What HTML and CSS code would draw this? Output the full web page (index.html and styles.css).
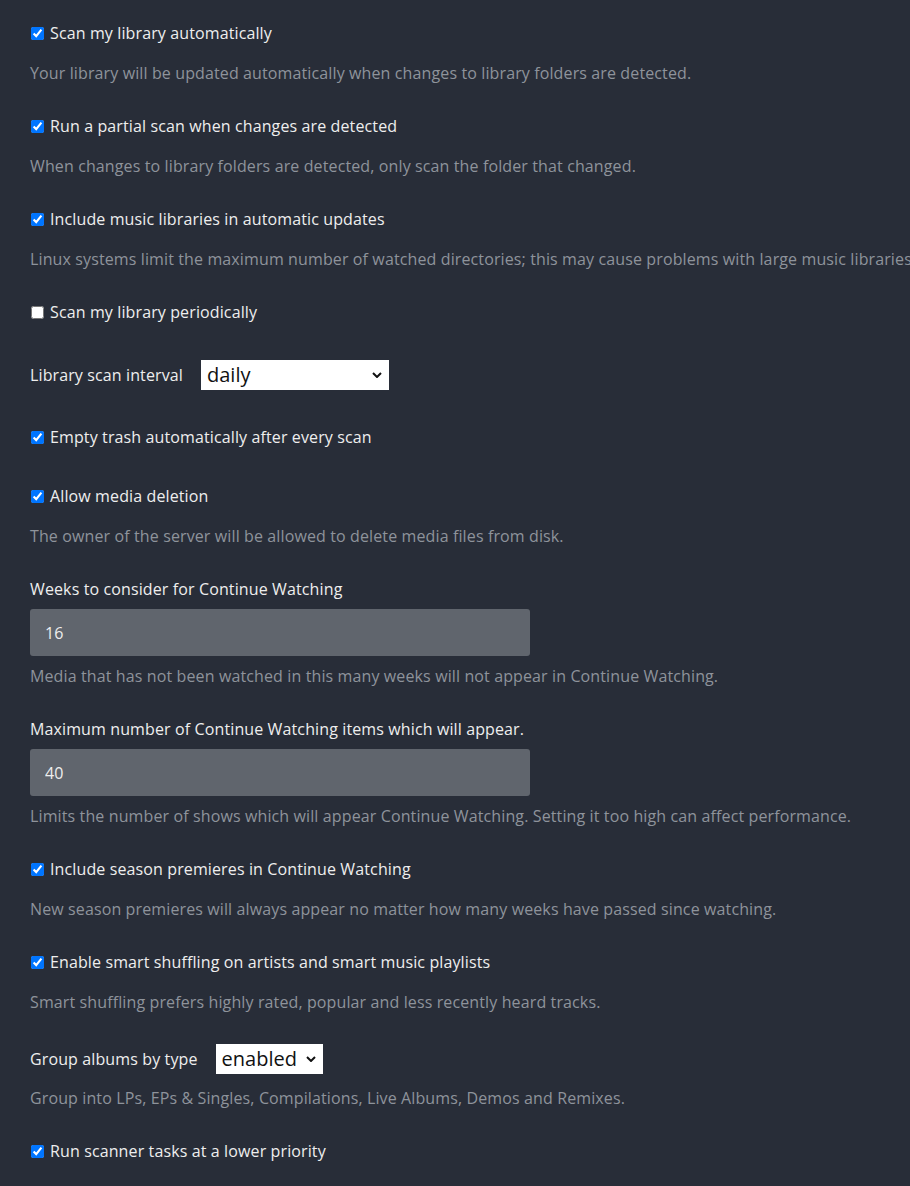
FILE: index.html
```html
<!DOCTYPE html>
<html lang="en">
<head>
<meta charset="utf-8">
<title>Library settings</title>
<link rel="stylesheet" href="styles.css">
</head>
<body>
<div class="settings">
  <div class="group">
    <label class="check"><input type="checkbox" checked><span>Scan my library automatically</span></label>
    <p class="desc">Your library will be updated automatically when changes to library folders are detected.</p>
  </div>
  <div class="group">
    <label class="check"><input type="checkbox" checked><span>Run a partial scan when changes are detected</span></label>
    <p class="desc">When changes to library folders are detected, only scan the folder that changed.</p>
  </div>
  <div class="group">
    <label class="check"><input type="checkbox" checked><span>Include music libraries in automatic updates</span></label>
    <p class="desc">Linux systems limit the maximum number of watched directories; this may cause problems with large music libraries.</p>
  </div>
  <div class="group solo">
    <label class="check"><input type="checkbox"><span>Scan my library periodically</span></label>
  </div>
  <div class="group solo">
    <div class="select-row">
      <span class="label">Library scan interval</span>
      <span class="select wide"><select><option>daily</option></select><svg class="chev" viewBox="0 0 10 6" width="10" height="6"><path d="M1 1l4 4 4-4" fill="none" stroke="#111" stroke-width="2"/></svg></span>
    </div>
  </div>
  <div class="group solo">
    <label class="check"><input type="checkbox" checked><span>Empty trash automatically after every scan</span></label>
  </div>
  <div class="group">
    <label class="check"><input type="checkbox" checked><span>Allow media deletion</span></label>
    <p class="desc">The owner of the server will be allowed to delete media files from disk.</p>
  </div>
  <div class="group">
    <div class="label">Weeks to consider for Continue Watching</div>
    <input class="text" type="text" value="16">
    <p class="desc tight">Media that has not been watched in this many weeks will not appear in Continue Watching.</p>
  </div>
  <div class="group">
    <div class="label">Maximum number of Continue Watching items which will appear.</div>
    <input class="text" type="text" value="40">
    <p class="desc tight">Limits the number of shows which will appear Continue Watching. Setting it too high can affect performance.</p>
  </div>
  <div class="group">
    <label class="check"><input type="checkbox" checked><span>Include season premieres in Continue Watching</span></label>
    <p class="desc">New season premieres will always appear no matter how many weeks have passed since watching.</p>
  </div>
  <div class="group">
    <label class="check"><input type="checkbox" checked><span>Enable smart shuffling on artists and smart music playlists</span></label>
    <p class="desc">Smart shuffling prefers highly rated, popular and less recently heard tracks.</p>
  </div>
  <div class="group">
    <div class="select-row">
      <span class="label">Group albums by type</span>
      <span class="select narrow"><select><option>enabled</option></select><svg class="chev" viewBox="0 0 10 6" width="10" height="6"><path d="M1 1l4 4 4-4" fill="none" stroke="#111" stroke-width="2"/></svg></span>
    </div>
    <p class="desc after-select">Group into LPs, EPs &amp; Singles, Compilations, Live Albums, Demos and Remixes.</p>
  </div>
  <div class="group">
    <label class="check"><input type="checkbox" checked><span>Run scanner tasks at a lower priority</span></label>
  </div>
</div>
</body>
</html>
```

FILE: styles.css
```css
html, body {
  margin: 0;
  padding: 0;
  background: #282d38;
  overflow: hidden;
}
body {
  font-family: "Open Sans", "Noto Sans", sans-serif;
  font-size: 16px;
  letter-spacing: 0.12px;
  color: #eeeeee;
  width: 910px;
  height: 1186px;
}
.settings {
  padding: 21px 0 0 30px;
  white-space: nowrap;
}
.group {
  margin-bottom: 29px;
}
.group.solo {
  margin-bottom: 35px;
}
.check {
  display: flex;
  align-items: center;
  height: 24px;
  line-height: 24px;
}
.check input {
  margin: 0 6px 0 1px;
  width: 13px;
  height: 13px;
  accent-color: #0075ff;
}
.label {
  display: block;
  line-height: 24px;
}
.desc {
  margin: 16px 0 0;
  line-height: 24px;
  color: #8e939b;
}
.desc.tight {
  margin-top: 8px;
}
.desc.after-select {
  margin-top: 12px;
}
.text {
  display: block;
  box-sizing: border-box;
  margin-top: 8px;
  width: 500px;
  height: 47px;
  padding: 0 15px;
  border: none;
  border-radius: 3px;
  background: #60656d;
  color: #eeeeee;
  font-family: inherit;
  font-size: 16px;
  letter-spacing: 0.12px;
  outline: none;
}
.select-row {
  display: flex;
  align-items: center;
  height: 31px;
}
.select-row .label {
  margin-right: 18px;
}
.select {
  position: relative;
  display: inline-block;
  background: #ffffff;
  height: 30px;
}
.select select {
  appearance: none;
  -webkit-appearance: none;
  border: none;
  background: transparent;
  height: 30px;
  padding: 0 0 0 6px;
  font-family: inherit;
  font-size: 20px;
  color: #111;
  outline: none;
}
.select.wide select {
  width: 188px;
}
.select.narrow select {
  width: 107px;
}
.chev {
  position: absolute;
  right: 7px;
  top: 12px;
  pointer-events: none;
}
```
